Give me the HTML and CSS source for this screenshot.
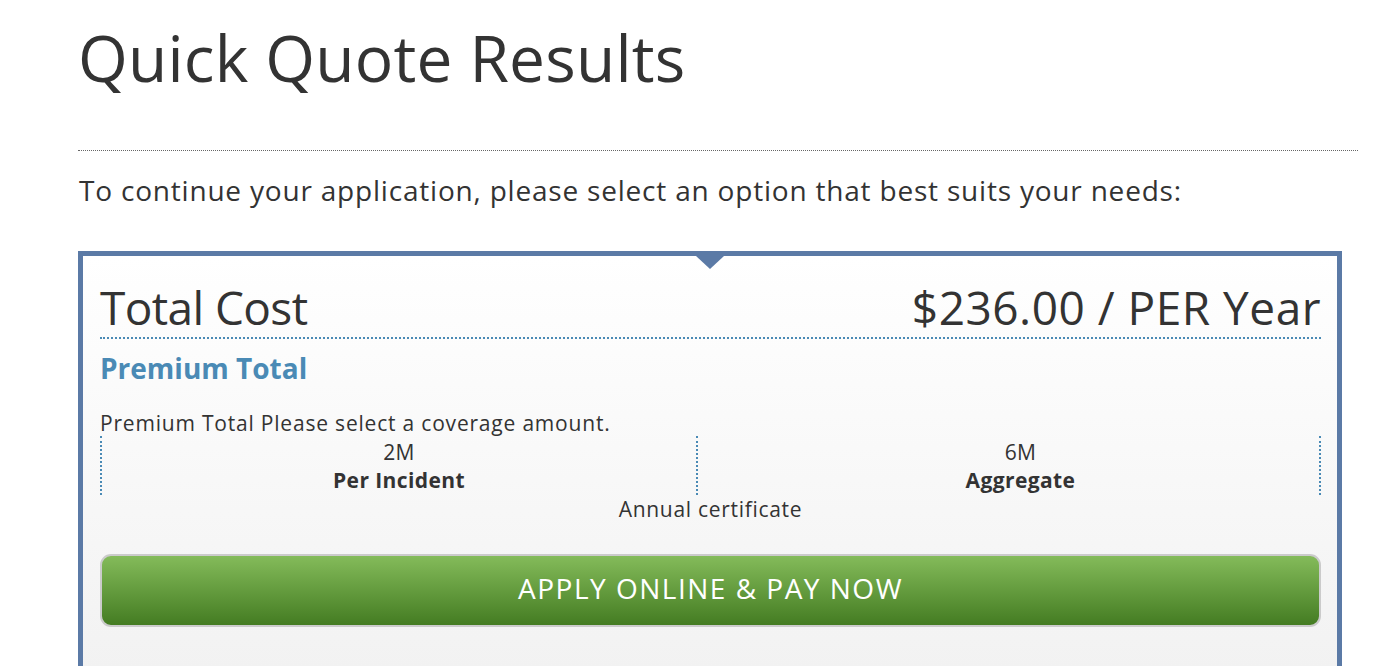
FILE: index.html
```html
<!DOCTYPE html>
<html>
<head>
<meta charset="utf-8">
<link rel="stylesheet" href="styles.css">
</head>
<body>
<div class="page">
  <h1 class="title">Quick Quote Results</h1>
  <div class="rule"></div>
  <p class="lead">To continue your application, please select an option that best suits your needs:</p>
  <div class="quote">
    <span class="pointer"></span>
    <div class="cost-row">
      <span class="cost-label">Total Cost</span>
      <span class="cost-value">$236.00 / PER Year</span>
    </div>
    <h2 class="premium">Premium Total</h2>
    <p class="note">Premium Total Please select a coverage amount.</p>
    <div class="coverage">
      <div class="cov-col">
        <div class="cov-amt">2M</div>
        <div class="cov-name">Per Incident</div>
      </div>
      <div class="cov-col cov-col-last">
        <div class="cov-amt">6M</div>
        <div class="cov-name">Aggregate</div>
      </div>
    </div>
    <div class="cert">Annual certificate</div>
    <a class="apply" href="#">APPLY ONLINE &amp; PAY NOW</a>
  </div>
</div>
</body>
</html>
```
FILE: styles.css
```css
* { box-sizing: border-box; }
html, body { margin: 0; padding: 0; background: #fff; }
body {
  font-family: "Open Sans", "Noto Sans", sans-serif;
  color: #333;
  overflow: hidden;
}
.page {
  padding: 0 38px 0 78px;
}
.title {
  margin: 0;
  padding-top: 20px;
  font-size: 64px;
  font-weight: 400;
  line-height: 76px;
  color: #333;
  letter-spacing: 0.2px;
}
.rule {
  margin-top: 54px;
  border-top: 1px dotted #666;
  height: 0;
}
.lead {
  margin: 22px 0 0 1px;
  font-size: 28px;
  line-height: 34px;
  letter-spacing: 0.8px;
  color: #333;
}
.quote {
  position: relative;
  margin-top: 44px;
  margin-right: 16px;
  border: 5px solid #5b7aa6;
  border-bottom: 0;
  background: linear-gradient(#ffffff, #f2f2f2);
  padding: 23px 16px 40px 17px;
  height: 420px;
}
.pointer {
  position: absolute;
  top: 0;
  left: 613px;
  width: 0;
  height: 0;
  border-left: 14px solid transparent;
  border-right: 14px solid transparent;
  border-top: 13px solid #5b7aa6;
}
.cost-row {
  display: flex;
  justify-content: space-between;
  align-items: baseline;
  border-bottom: 2px dotted #4a8ab5;
  padding-bottom: 2px;
  font-size: 46px;
  line-height: 56px;
  color: #333;
}
.cost-label { letter-spacing: -0.6px; }
.cost-value { letter-spacing: 0.5px; }
.premium {
  margin: 10px 0 0;
  font-size: 28px;
  font-weight: 700;
  line-height: 38px;
  color: #4a8ab5;
}
.note {
  margin: 23px 0 0;
  font-size: 21px;
  line-height: 26px;
  letter-spacing: 0.8px;
}
.coverage {
  display: grid;
  grid-template-columns: 596px 1fr;
}
.cov-col {
  border-left: 2px dotted #4a8ab5;
  text-align: center;
  font-size: 21px;
  line-height: 28px;
  height: 59px;
  padding-top: 2px;
  letter-spacing: 0.4px;
}
.cov-col-last {
  border-right: 2px dotted #4a8ab5;
  padding-left: 24px;
}
.cov-name { font-weight: 700; }
.cert {
  text-align: center;
  font-size: 21px;
  line-height: 28px;
  letter-spacing: 0.7px;
}
.apply {
  display: block;
  margin-top: 31px;
  height: 73px;
  border: 2px solid #cbcbcb;
  border-radius: 11px;
  background: linear-gradient(#84bb5a, #447c22);
  color: #fff;
  text-decoration: none;
  text-align: center;
  font-size: 28px;
  line-height: 64px;
  letter-spacing: 1.5px;
}
```
